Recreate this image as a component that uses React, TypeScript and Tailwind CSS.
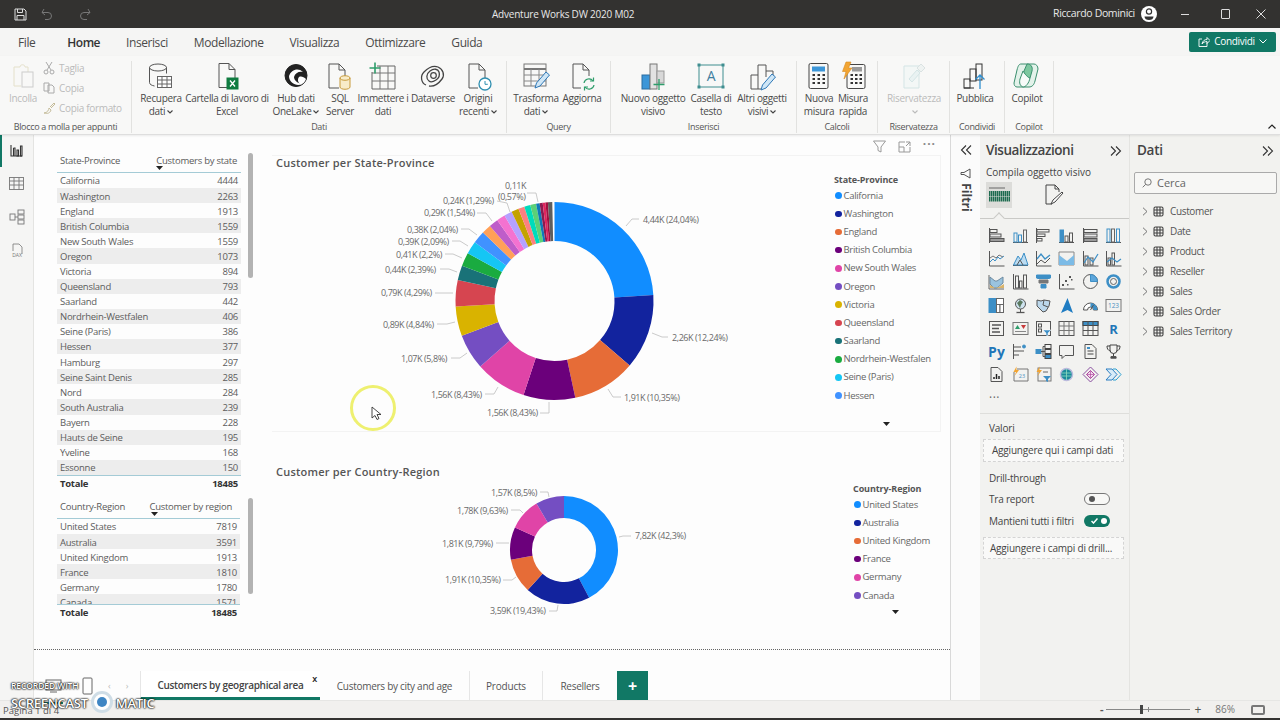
import React from "react";

const FONT = "[font-family:'Open_Sans','Noto_Sans',sans-serif]";
const PALETTE = ["#118dff", "#12239e", "#e66c37", "#6b007b", "#e044a7", "#744ec2", "#d9b300", "#d64550", "#197278", "#1aab40", "#15c6f4", "#4092ff", "#ffa058", "#be5dc9", "#f472d0", "#b5a1ff", "#c4a200", "#fd8080", "#00dbbc", "#5bd078", "#0f7ab8", "#8d1a4f", "#e0245e", "#a01040", "#5e5e5e"];

function arc(cx: number, cy: number, R: number, r: number, a0: number, a1: number) {
  const p = (rad: number, a: number) => {
    const t = ((a / 100) * 360 - 90) * (Math.PI / 180);
    return `${(cx + rad * Math.cos(t)).toFixed(2)} ${(cy + rad * Math.sin(t)).toFixed(2)}`;
  };
  const large = a1 - a0 > 50 ? 1 : 0;
  return `M${p(R, a0)}A${R} ${R} 0 ${large} 1 ${p(R, a1)}L${p(r, a1)}A${r} ${r} 0 ${large} 0 ${p(r, a0)}Z`;
}

function Donut({ cx, cy, R, r, values, labels, lines, viewBox, w, h }: { cx: number; cy: number; R: number; r: number; values: number[]; labels: [string, number, number][]; lines: string[]; viewBox: string; w: number; h: number }) {
  let acc = 0;
  return (
    <svg width={w} height={h} viewBox={viewBox} className="shrink-0">
      {values.map((v, i) => {
        const d = arc(cx, cy, R, r, acc, acc + v);
        acc += v;
        return <path key={i} d={d} fill={PALETTE[i]} />;
      })}
      {lines.map((l, i) => (
        <polyline key={i} points={l} fill="none" stroke="#bdbdbd" strokeWidth="0.8" />
      ))}
      {labels.map(([t, x, y], i) => (
        <text key={i} x={x} y={y + 3} fontSize="9" fill="#6a6a6a" style={{ fontFamily: "'Open Sans'" }} letterSpacing="-0.42">
          {t}
        </text>
      ))}
    </svg>
  );
}

const s1 = ["California:4444", "Washington:2263", "England:1913", "British Columbia:1559", "New South Wales:1559", "Oregon:1073", "Victoria:894", "Queensland:793", "Saarland:442", "Nordrhein-Westfalen:406", "Seine (Paris):386", "Hessen:377", "Hamburg:297", "Seine Saint Denis:285", "Nord:284", "South Australia:239", "Bayern:228", "Hauts de Seine:195", "Yveline:168", "Essonne:150"];
const s2 = ["United States:7819", "Australia:3591", "United Kingdom:1913", "France:1810", "Germany:1780", "Canada:1571"];

function Caret({ className }: { className: string }) {
  return (
    <svg width="7" height="4" viewBox="0 0 7 4" className={className}>
      <path d="M0 0h7L3.500 4z" fill="#222" />
    </svg>
  );
}

function Table({ head, rows, width, bodyH, caretX, total, headPr }: { head: [string, string]; rows: string[]; width: number; bodyH: string; caretX: string; total: string; headPr: string }) {
  return (
    <div style={{ width }} className="shrink-0 text-[9.500px] tracking-[-0.26px] text-[#5c5c5c]">
      <div className={headPr + " relative flex justify-between h-[21px] pl-[3px] pt-[2px] leading-[13px] border-b border-[#a4cbd6] text-[#5a5a5a]"}>
        <span>{head[0]}</span>
        <span>{head[1]}</span>
        <Caret className={caretX} />
      </div>
      <div className={bodyH + " overflow-hidden"}>
        {rows.map((r, i) => {
          const [a, b] = r.split(":");
          return (
            <div key={a} className={i % 2 ? "flex justify-between items-center h-[15.1px] px-[3px] pt-[2px] bg-[#ededed]" : "flex justify-between items-center h-[15.1px] px-[3px] pt-[2px]"}>
              <span>{a}</span>
              <span>{b}</span>
            </div>
          );
        })}
      </div>
      <div className="flex justify-between items-center h-[16px] px-[3px] pt-[1px] font-bold text-[#333] border-t border-[#a4cbd6]">
        <span>Totale</span>
        <span>{total}</span>
      </div>
    </div>
  );
}

function Legend({ title, items, colW, caret }: { title: string; items: string[]; colW: string; caret: string }) {
  return (
    <div className={colW + " shrink-0 relative text-[9.500px] tracking-[-0.3px] text-[#666]"}>
      <div className="h-[10px] leading-[10px] font-bold text-[#555] text-[9px] tracking-[-0.1px] mb-[1.500px]">{title}</div>
      <div className="flex flex-col">
        {items.map((t, i) => (
          <div key={t} className="flex items-center gap-[2px] h-[18.2px] leading-[18px] pl-[1px]">
            <span className="w-[6.500px] h-[6.500px] rounded-full shrink-0" style={{ background: PALETTE[i] }} />
            <span>{t}</span>
          </div>
        ))}
      </div>
      <Caret className={caret} />
    </div>
  );
}

const I = (p: { children: React.ReactNode; w?: number; h?: number; vb?: string; o?: number }) => (
  <svg width={p.w ?? 30} height={p.h ?? 30} viewBox={p.vb ?? "0 0 30 30"} fill="none" stroke="#555" strokeWidth="1" opacity={p.o ?? 1} className="shrink-0">
    {p.children}
  </svg>
);

const RibbonIcons: Record<string, React.ReactNode> = {
  recupera: (
    <I>
      <ellipse cx="12" cy="6.500" rx="8.500" ry="3.500" />
      <path d="M3.500 6.500v15c0 2 2.500 3 5 3.500M20.500 6.500v6" />
      <rect x="11.500" y="15.500" width="14" height="11" fill="#fff" stroke="#666" />
      <path d="M11.500 19h14M11.500 23h14M16 15.500v11M21 15.500v11" stroke="#666" />
    </I>
  ),
  excel: (
    <I>
      <path d="M7 2.500h10l6 6v9M7 2.500v24h8M17 2.500v6h6" />
      <rect x="15" y="17" width="11" height="11" fill="#107c41" stroke="#107c41" />
      <path d="M18 19.500l5 6M23 19.500l-5 6" stroke="#fff" strokeWidth="1.300" />
    </I>
  ),
  onelake: (
    <I>
      <circle cx="15" cy="14.500" r="11" fill="#222" stroke="#222" />
      <path d="M8 15c2-6 9-9 14-4-4-1-8 1-9 5 0 3 3 6 8 7-5 3-13-1-13-8z" fill="#fff" stroke="none" />
      <path d="M18 16c2-1 5 0 7 2-1 3-3 5-5 5.500-3-1-4-5-2-7.500z" fill="#fff" stroke="none" />
    </I>
  ),
  sql: (
    <I>
      <path d="M4 3h10l6 6v9M4 3v24h10M14 3v6h6" />
      <path d="M15 17c0-3 10-3 10 0v9c0 3-10 3-10 0z" fill="#f8ecc9" stroke="#c79a3a" />
      <path d="M15 17c0 3 10 3 10 0" stroke="#c79a3a" />
    </I>
  ),
  immettere: (
    <I>
      <path d="M9 5h18v23H4V11" stroke="#666" />
      <path d="M4 12h23M4 20h23M12 5v23M20 5v23" stroke="#777" />
      <path d="M7 1.500v11M1.500 7h11" stroke="#2e9d6b" strokeWidth="1.600" />
    </I>
  ),
  dataverse: (
    <I>
      <path d="M8 24c-5-2-6-9-2-13s9-7 14-5 7 8 4 12-8 8-13 7" stroke="#444" strokeWidth="1.300" />
      <path d="M11 20c-3-2-3-7 1-10s8-2 9 1 0 6-3 8-5 3-7 1z" stroke="#444" strokeWidth="1.300" />
      <circle cx="15.500" cy="14.500" r="2.800" stroke="#444" strokeWidth="1.200" />
    </I>
  ),
  origini: (
    <I>
      <path d="M6 3h10l6 6v8M6 3v24h9M16 3v6h6" />
      <circle cx="22" cy="23" r="6" fill="#fff" stroke="#2f8fb0" strokeWidth="1.300" />
      <path d="M22 20v3.300h2.800" stroke="#2f8fb0" />
    </I>
  ),
  trasforma: (
    <I>
      <rect x="3" y="3" width="22" height="22" stroke="#777" />
      <path d="M3 8h22" stroke="#777" strokeWidth="2" />
      <path d="M3 14h22M3 20h22M10 8v17M18 8v17" stroke="#888" />
      <path d="M14 27l1.500-5L25 11l3.500 3L19 25z" fill="#cfe6f6" stroke="#2f78b7" />
    </I>
  ),
  aggiorna: (
    <I>
      <path d="M6 3h10l6 6v6M6 3v24h8M16 3v6h6" />
      <path d="M17 22a5 5 0 0 1 9-2M27 24a5 5 0 0 1-9 2" stroke="#2e9d6b" strokeWidth="1.200" />
      <path d="M26.500 16.500V20h-3.500M17.500 29.500V26H21" stroke="#2e9d6b" strokeWidth="1.200" />
    </I>
  ),
  nuovo: (
    <I>
      <rect x="4" y="14" width="8" height="14" fill="#3c96d8" stroke="#2a6ca0" />
      <rect x="12" y="3" width="7" height="25" fill="#e2e2e2" stroke="#777" />
      <rect x="19" y="10" width="7" height="12" fill="#d8d8d8" stroke="#999" />
      <path d="M21 18v11M15.500 23.500h11" stroke="#2e9d6b" strokeWidth="1.300" />
    </I>
  ),
  casella: (
    <I>
      <rect x="3" y="4" width="24" height="22" stroke="#3f8e90" strokeWidth="1" />
      <path d="M1.500 2.500h3v3h-3zM25.500 2.500h3v3h-3zM1.500 24.500h3v3h-3zM25.500 24.500h3v3h-3z" fill="#3f8e90" stroke="none" />
      <text x="15" y="20" fontSize="14" textAnchor="middle" fill="#3f7fa0" stroke="none">A</text>
    </I>
  ),
  altri: (
    <I>
      <path d="M4 28V14h7M11 28V4h8v12M19 10h7v6M4 28h10" />
      <path d="M14 29l1.500-5L25 13l3.500 3L19 27z" fill="#cfe6f6" stroke="#2f78b7" />
    </I>
  ),
  nuovamisura: (
    <I>
      <rect x="5" y="2.500" width="19" height="25" rx="1.500" stroke="#444" />
      <rect x="8" y="5.500" width="13" height="5" fill="#3c96d8" stroke="none" />
      <path d="M8.500 14h2.500M13.500 14h2.500M18.500 14h2.500M8.500 18h2.500M13.500 18h2.500M18.500 18h2.500M8.500 22h2.500M13.500 22h2.500M18.500 22h2.500" stroke="#333" strokeWidth="2" />
    </I>
  ),
  rapida: (
    <I>
      <rect x="9" y="3.500" width="18" height="24" rx="1.500" stroke="#444" />
      <path d="M12.500 14h2.500M17 14h2.500M21.500 14h2.500M12.500 18h2.500M17 18h2.500M21.500 18h2.500M12.500 22h2.500M17 22h2.500M21.500 22h2.500" stroke="#333" strokeWidth="2" />
      <rect x="14" y="6" width="10" height="4.500" fill="#9a9a9a" stroke="none" />
      <path d="M8 1h5l-2.500 6H14L6 18l2-7.500H4.500z" fill="#f2a533" stroke="#d68a1f" strokeWidth="0.600" />
    </I>
  ),
  riserv: (
    <I o={0.45}>
      <path d="M5 5h15v22H5z" stroke="#a9cfd1" fill="#eef6f6" />
      <path d="M10 18l8-9 3 3-8 9z" stroke="#a9cfd1" fill="#d9ecec" />
      <path d="M18 7l4-4 4 4-4 4z" stroke="#b7c9c9" fill="#e5eeee" />
    </I>
  ),
  pubblica: (
    <I>
      <rect x="4" y="18" width="6" height="9" stroke="#333" />
      <rect x="10" y="8" width="6" height="12" stroke="#333" />
      <rect x="16" y="3" width="6" height="16" stroke="#333" />
      <path d="M4 27h10" stroke="#333" />
      <path d="M20 28V14M15.500 18.500L20 14l4.500 4.500" stroke="#2f8fd0" strokeWidth="1.300" />
    </I>
  ),
  copilot: (
    <I>
      <path d="M9 3h13c2 0 4 2 4 5l-3 12c-1 4-3 6-6 6H5c-2 0-3-2-3-4l3-13c1-4 2-6 4-6z" stroke="#3a8f6e" fill="#e3f2ea" />
      <path d="M15 3c4 0 6 3 5 7l-2 7c-4 0-7-3-6-7z" fill="#7cc79f" stroke="#3a8f6e" />
      <path d="M11 10c3 5 6 7 7 7-1 5-4 9-7 9-3-1-4-4-3-8z" fill="#f7fbf9" stroke="#3a8f6e" />
    </I>
  ),
};

function Chev({ c = "#444" }: { c?: string }) {
  return (
    <svg width="6" height="4" viewBox="0 0 6 4" className="inline-block ml-[2px] align-middle">
      <path d="M0.500 0.500L3 3l2.500-2.500" stroke={c} fill="none" strokeWidth="1.100" />
    </svg>
  );
}

function Btn({ w, icon, a, b, caret, off }: { w: string; icon: string; a: string; b?: string; caret?: boolean; off?: boolean }) {
  return (
    <div className={w + " shrink-0 flex flex-col items-center " + (off ? "text-[#bbb]" : "text-[#4a4a4a]")}>
      <div className="h-[31px] flex items-start justify-center">{RibbonIcons[icon]}</div>
      <div className="h-[13px] leading-[13px] whitespace-nowrap">{a}{caret && b === undefined ? <Chev /> : null}</div>
      {b !== undefined && <div className="h-[13px] leading-[13px] whitespace-nowrap">{b}{caret ? <Chev c={off ? "#bbb" : "#444"} /> : null}</div>}
    </div>
  );
}

function Group({ w, label, pl, children }: { w: string; label: string; pl: string; children: React.ReactNode }) {
  return (
    <div className={w + " shrink-0 h-full flex flex-col border-r border-[#e2e2e0]"}>
      <div className={pl + " h-[60px] flex"}>{children}</div>
      <div className="h-[12px] leading-[12px] text-center text-[9px] text-[#555]">{label}</div>
    </div>
  );
}

const V = ({ children }: { children: React.ReactNode }) => (
  <svg width="17" height="17" viewBox="0 0 17 17" fill="none" stroke="#555" strokeWidth="1">
    {children}
  </svg>
);
const B = "#3d8fc6";
const G = "#9a9a9a";
const vizIcons: React.ReactNode[] = [
  <V><path d="M1.500 1v15" /><rect x="2" y="2.500" width="7" height="3" /><rect x="2" y="7" width="11" height="3" fill="#e8e8e8" /><rect x="2" y="11.500" width="14" height="3" fill={G} /></V>,
  <V><path d="M1 15.500h15" /><rect x="2" y="6" width="3" height="9" stroke={B} /><rect x="6.500" y="8" width="3" height="7" stroke={B} /><rect x="11.500" y="3" width="3" height="12" stroke="#666" /></V>,
  <V><path d="M1.500 1v15" /><rect x="2" y="2.500" width="12" height="2.500" /><rect x="2" y="7" width="8" height="2.500" /><rect x="2" y="11.500" width="5" height="2.500" /></V>,
  <V><path d="M1 15.500h15" /><rect x="2" y="3" width="3.500" height="12" fill={B} stroke={B} /><rect x="7" y="9" width="3" height="6" /><rect x="11.500" y="6" width="3" height="9" /></V>,
  <V><path d="M1.500 1v15" /><rect x="2" y="2.500" width="13" height="3" /><rect x="2" y="7" width="13" height="3" fill="#e8e8e8" /><rect x="2" y="11.500" width="13" height="3" fill={G} /></V>,
  <V><path d="M1 15.500h15" /><rect x="2" y="2" width="3" height="13" stroke={B} /><rect x="6.500" y="2" width="3" height="13" stroke="#666" /><rect x="11.500" y="2" width="3" height="13" stroke={B} /></V>,
  <V><path d="M1.500 1v15h15" /><path d="M2 12l3-3 2 2 3-4 2 2 4-3" stroke={B} /><path d="M2 8l3-2 3 2 3-3 4 2" stroke="#777" /></V>,
  <V><path d="M1 15.500h15" /><path d="M1.500 15L6 6l3 4 3-7 4 12z" fill="#bcdcf1" stroke={B} /><path d="M5 15l3-5 3 5" stroke="#555" /></V>,
  <V><path d="M1.500 1v15h15" /><path d="M2 9l4-5 4 5 5-4" stroke={B} strokeWidth="1.300" /><path d="M2 14l4-4 4 3 5-5" stroke="#555" /></V>,
  <V><path d="M1 2h15v13H1z" stroke="#888" /><path d="M1 5l4 3 4 3 7-6v10H1z" fill="#7cbbe6" stroke="none" /></V>,
  <V><path d="M1.500 1v15h15" /><rect x="3" y="6" width="3" height="9" stroke="#555" /><rect x="8" y="8" width="3" height="7" stroke="#555" /><path d="M2 13l4-6 5 5 5-8" stroke={B} strokeWidth="1.200" /></V>,
  <V><path d="M1.500 1v15h15" /><rect x="3" y="8" width="2.500" height="7" stroke="#555" /><rect x="7" y="3" width="2.500" height="12" stroke="#555" /><path d="M2 12l5-4 5 4 4-3" stroke={B} strokeWidth="1.200" /></V>,
  <V><path d="M1 2v14h15" stroke="#666" /><path d="M2 4l5 4 2 0 6-4v6l-6 5-3 0-4-4z" fill="#9ac3de" stroke="#6d8aa0" /><path d="M2 12l5 3 4-1 5-3v4H2z" fill="#d9b36b" stroke="none" /></V>,
  <V><path d="M1.500 1v15h15" /><rect x="3.500" y="3" width="3" height="12" /><rect x="7.500" y="8" width="2.500" height="7" /><rect x="11.500" y="2" width="3" height="13" /></V>,
  <V><path d="M1.500 2h14v3l-1 .5h-12l-1-.5z" fill={B} stroke={B} /><path d="M4 7h9v3H4z" fill="#777" stroke="#777" /><path d="M6 11.500h5V15H6z" fill={B} stroke={B} /></V>,
  <V><path d="M1.500 1v15h15" /><g fill="#555" stroke="none"><rect x="4" y="11" width="2" height="2" /><rect x="7" y="7" width="2" height="2" /><rect x="11" y="3" width="2" height="2" /><rect x="13" y="6" width="1.500" height="1.500" /><rect x="9" y="11" width="1.500" height="1.500" /></g></V>,
  <V><circle cx="8.500" cy="8.500" r="7" stroke="#555" /><path d="M8.500 1.500a7 7 0 0 1 7 7h-7z" fill="#5ca6db" stroke={B} /></V>,
  <V><circle cx="8.500" cy="8.500" r="6" stroke={B} strokeWidth="2.500" /><circle cx="8.500" cy="8.500" r="3" stroke="#666" /></V>,
  <V><rect x="1" y="1.500" width="7.500" height="14" fill={B} stroke={B} /><rect x="8.500" y="1.500" width="7" height="6" fill="#fff" stroke="#666" /><rect x="8.500" y="7.500" width="3.500" height="8" fill="#fff" stroke="#666" /><rect x="12" y="7.500" width="3.500" height="8" fill="#fff" stroke="#666" /></V>,
  <V><circle cx="8.500" cy="7" r="5" fill="#cfe3ef" stroke="#555" /><path d="M5 6l3-3 3 2-2 3-1 3z" fill="#5b7a60" stroke="none" /><path d="M4.500 15.500h8" strokeWidth="1.300" /><path d="M8.500 12v3.500" /></V>,
  <V><path d="M2 3l4 1 3-1 6 1-1 5-3 5-3 1-3-3-3-3z" fill="#bcd8ec" stroke="#555" /><path d="M9 3l-1 5 5 2" stroke="#555" /></V>,
  <V><path d="M9.500 1L15 16l-5.500-3L3 16z" fill="#1f7cc2" stroke="none" /></V>,
  <V><path d="M1.500 13a7 7 0 0 1 14 0h-4a3 3 0 0 0-6 0z" stroke="#555" fill="#fff" /><path d="M8.500 6a7 7 0 0 1 7 7h-4a3 3 0 0 0-3-3z" fill={B} stroke="none" /><path d="M8.500 13l3-5" /></V>,
  <V><rect x="1" y="2.500" width="15" height="12" stroke="#777" /><text x="8.500" y="11" fontSize="6.500" textAnchor="middle" fill="#4a90c0" stroke="none">123</text></V>,
  <V><rect x="1.500" y="1.500" width="14" height="14" /><path d="M4 5h9M4 8.500h7M4 12h8" stroke="#555" strokeWidth="1.300" /></V>,
  <V><rect x="1" y="2.500" width="15" height="12" stroke="#777" /><path d="M3 9l2.500-4L8 9z" fill="#2e9d6b" stroke="none" /><path d="M9 5h5l-2.500 4z" fill="#c83a3a" stroke="none" /><path d="M3 11.500h11" stroke="#888" /></V>,
  <V><rect x="1.500" y="1.500" width="14" height="14" /><rect x="3.500" y="4" width="3" height="3" /><rect x="3.500" y="9" width="3" height="3" /><path d="M8 10h8l-3 3v3l-2-1v-2z" fill="#3d8fc6" stroke="#fff" strokeWidth="0.500" /></V>,
  <V><rect x="1" y="1.500" width="15" height="14" /><path d="M1 6h15M1 10.500h15M6 1.500v14M11 1.500v14" stroke="#777" /></V>,
  <V><rect x="1" y="1.500" width="15" height="14" /><rect x="1" y="1.500" width="15" height="4" fill={B} stroke="#444" /><path d="M1 10.500h15M6 1.500v14M11 1.500v14" /></V>,
  <V><text x="8.500" y="13.500" fontSize="13" fontWeight="700" textAnchor="middle" fill="#1f76b8" stroke="none">R</text></V>,
  <V><text x="8.500" y="14" fontSize="14" fontWeight="700" textAnchor="middle" fill="#1f76b8" stroke="none">Py</text></V>,
  <V><path d="M1.500 1v15" /><path d="M2 4h7M2 8h10M2 12h5" /><circle cx="12" cy="3.500" r="1.500" fill={B} stroke={B} /></V>,
  <V><rect x="1" y="6.500" width="5" height="4" fill={B} stroke={B} /><rect x="10" y="1.500" width="6" height="4" stroke="#444" /><rect x="10" y="6.500" width="6" height="4" stroke="#444" /><rect x="10" y="11.500" width="6" height="4" fill={B} stroke="#444" /><path d="M6 8.500h4M8 3.500v10h2M8 3.500h2" /></V>,
  <V><path d="M1.500 2.500h14v10H7l-3 3v-3H1.500z" /></V>,
  <V><path d="M3 1.500h7l4 4v10H3z" /><path d="M5.500 8h6M5.500 11h6" stroke="#444" /><rect x="5" y="4" width="3" height="2" fill={B} stroke="none" /></V>,
  <V><path d="M5 2h7v5a3.500 3.500 0 0 1-7 0z" stroke="#444" /><path d="M5 3H2c0 3 1 4 3 5M12 3h3c0 3-1 4-3 5M8.500 10.500V13M5.500 15h6" stroke="#444" /><path d="M6 13.500h5v1.500H6z" fill="#444" /></V>,
  <V><path d="M3 1.500h7l4 4v10H3z" /><path d="M6 13v-2M8.500 13V8M11 13v-3" stroke="#222" strokeWidth="1.500" /></V>,
  <V><path d="M5 3h11v12H2V6" stroke="#777" /><text x="10" y="12" fontSize="5.500" textAnchor="middle" fill="#4a90c0" stroke="none">23</text><path d="M4.500 0.500L1.500 6H4L2.500 10 7 4H4.500z" fill="#f2a533" stroke="none" /></V>,
  <V><rect x="3" y="2" width="13" height="13" stroke="#777" /><path d="M4.500 0.500L1.500 6H4L2.500 10 7 4H4.500z" fill="#f2a533" stroke="none" /><path d="M8 10h8l-3 3v3l-2-1v-2z" fill="#3d8fc6" stroke="none" /><path d="M8 6h5" stroke="#666" /></V>,
  <V><circle cx="8.500" cy="8.500" r="6" fill="#1a8a9a" stroke="#bbd" strokeWidth="1.500" /><path d="M4 7h9M4 10h9M8.500 3v11" stroke="#8fdcc0" strokeWidth="0.800" /></V>,
  <V><path d="M8.500 1l7.500 7.500-7.500 7.500L1 8.500z" stroke="#8a4fa0" /><path d="M8.500 4.500l4 4-4 4-4-4z" fill="#f3d9ee" stroke="#b04aa0" /><path d="M4.500 8.500h8M8.500 4.500v8" stroke="#b04aa0" strokeWidth="0.700" /></V>,
  <V><path d="M1 3h6l5 5.500-5 5.500H1l5-5.500z" stroke="#2e7fc2" fill="#d8ecf8" /><path d="M8 3h3l5 5.500-5 5.500H8" stroke="#2ba0d0" /></V>,
];

function ChevRight() {
  return (
    <svg width="6" height="9" viewBox="0 0 6 9" fill="none" stroke="#666" strokeWidth="0.900"><path d="M1 .7l4 3.800-4 3.800" /></svg>
  );
}
function TblIcon() {
  return (
    <svg width="11" height="11" viewBox="0 0 11 11" fill="none" stroke="#444" strokeWidth="1.100"><rect x="1" y="1" width="9" height="9" rx="1.500" /><path d="M1 4h9M1 7h9M4 1v9M7 1v9" /></svg>
  );
}
function Double({ left }: { left?: boolean }) {
  return (
    <svg width="12" height="10" viewBox="0 0 12 10" fill="none" stroke="#333" strokeWidth="1.100">
      {left ? <path d="M6 .5L1.500 5 6 9.500M11 .5L6.500 5 11 9.500" /> : <path d="M1 .5L5.500 5 1 9.500M6 .5L10.500 5 6 9.500" />}
    </svg>
  );
}

export default function App() {
  const tabs = ["File", "Home", "Inserisci", "Modellazione", "Visualizza", "Ottimizzare", "Guida"];
  return (
    <div className={FONT + " relative w-[1280px] h-[720px] overflow-hidden flex flex-col bg-[#f5f5f4] text-[#444]"}>
      {/* Title bar */}
      <div className="h-[28px] shrink-0 bg-[#333230] flex items-center text-[#e8e8e8] text-[10.5px]">
        <div className="w-[492px] shrink-0 flex items-center pl-[14px] gap-[14px]">
          <svg width="13" height="13" viewBox="0 0 13 13" fill="none" stroke="#ddd" strokeWidth="1"><path d="M1 1h9l2 2v9H1z" /><path d="M3.500 1v3.500h5V1M3 12V7.500h7V12" /></svg>
          <svg width="12" height="12" viewBox="0 0 12 12" fill="none" stroke="#777" strokeWidth="1"><path d="M3 1L1 4.500h6a3.500 3.500 0 0 1 0 7H4M1 4.500L4 7" /></svg>
          <svg width="12" height="12" viewBox="0 0 12 12" fill="none" stroke="#777" strokeWidth="1" className="ml-[12px]"><path d="M9 1l2 3.500H5a3.500 3.500 0 0 0 0 7h3M11 4.500L8 7" /></svg>
        </div>
        <div className="w-[561px] shrink-0 text-[10px] tracking-[-0.22px] whitespace-nowrap">Adventure Works DW 2020 M02</div>
        <div className="w-[88px] shrink-0 tracking-[-0.35px] whitespace-nowrap">Riccardo Dominici</div>
        <svg width="16" height="16" viewBox="0 0 16 16" className="shrink-0"><circle cx="8" cy="8" r="8" fill="#fff" /><circle cx="8" cy="5.500" r="2.600" fill="none" stroke="#333" strokeWidth="1.200" /><path d="M3.500 10.500h9c0 2.500-2 3.500-4.500 3.500s-4.500-1-4.500-3.500z" fill="#333" /></svg>
        <div className="ml-[24px] w-[8px] h-[1px] bg-[#ddd]" />
        <div className="ml-[32px] w-[9px] h-[10px] border border-[#ddd] rounded-[1px]" />
        <svg width="10" height="10" viewBox="0 0 10 10" className="ml-[26px]" stroke="#ddd" strokeWidth="1"><path d="M.5.500l9 9M9.500.500l-9 9" /></svg>
      </div>
      {/* Menu tabs */}
      <div className="h-[28px] shrink-0 flex items-center pl-[18px] pr-[4px] text-[12px] text-[#4a4a4a]">
        <div className="flex gap-[26px] tracking-[-0.42px] pt-[2px]">
          {tabs.map((t) => (
            <div key={t} className={t === "File" ? "mr-[6px]" : t === "Home" ? "relative font-semibold text-[#333] tracking-[-0.5px]" : ""}>
              {t}
              {t === "Home" && <div className="absolute left-0 right-0 bottom-[-6px] h-[2px] bg-[#117865]" />}
            </div>
          ))}
        </div>
        <div className="ml-auto mt-[-1px] w-[87px] h-[20px] rounded-[2px] bg-[#117865] text-white text-[10px] flex items-center justify-center gap-[4px]">
          <svg width="12" height="12" viewBox="0 0 12 12" fill="none" stroke="#fff" strokeWidth="0.900"><path d="M9 6.500v4H1V3h3M4 8c.5-3 2.500-4.500 5-4.500V1.500l3 3-3 3V5.500C7 5.500 5 6.500 4 8z" /></svg>
          <span className="tracking-[-0.3px]">Condividi</span>
          <svg width="8" height="5" viewBox="0 0 8 5" fill="none" stroke="#fff"><path d="M.5.500L4 4 7.500.500" /></svg>
        </div>
      </div>
      {/* Ribbon */}
      <div className="relative h-[79px] shrink-0 pt-[5px] pb-[1px] flex text-[10px] tracking-[-0.32px] border-b border-[#dedede] shadow-[0_1px_2px_rgba(0,0,0,0.08)] bg-[#f8f8f7] z-10">
        <div className="w-[132px] shrink-0 h-full flex flex-col border-r border-[#e2e2e0]">
          <div className="h-[60px] flex text-[#bbb]">
            <div className="w-[46px] shrink-0 flex flex-col items-center">
              <div className="h-[31px]">
                <I o={0.55}>
                  <path d="M9 6h3c0-3 5-3 5 0h3v5" stroke="#d6cfa8" />
                  <path d="M9 6H6v19h7" stroke="#d6cfa8" />
                  <rect x="14" y="11" width="11" height="15" stroke="#aaa" />
                </I>
              </div>
              <div className="leading-[13px]">Incolla</div>
            </div>
            <div className="flex flex-col mt-[-1px] gap-[4px] leading-[16px] ml-[-3px]">
              <div className="flex items-center h-[16px] gap-[4px]">
                <svg width="12" height="14" viewBox="0 0 12 14" fill="none" stroke="#aaa"><path d="M3 1l5 8M9 1L4 9" /><circle cx="3" cy="11" r="2" /><circle cx="9" cy="11" r="2" /></svg>
                <span>Taglia</span>
              </div>
              <div className="flex items-center h-[16px] gap-[4px]">
                <svg width="12" height="12" viewBox="0 0 12 12" fill="none" stroke="#aaa"><path d="M1 1h5v8H1zM5 3h4l2 2v6H5z" /></svg>
                <span>Copia</span>
              </div>
              <div className="flex items-center h-[16px] gap-[3px]">
                <svg width="13" height="13" viewBox="0 0 13 13" fill="none" stroke="#c5bc9a"><path d="M1 11c3 0 5-3 5-5l2 2c-1 3-3 4-7 3zM7 5l4-4 1 1-4 4" /></svg>
                <span className="whitespace-nowrap">Copia formato</span>
              </div>
            </div>
          </div>
          <div className="h-[12px] leading-[12px] text-center text-[9px] text-[#555]">Blocco a molla per appunti</div>
        </div>
        <Group w="w-[375px]" label="Dati" pl="pl-[8px]">
          <Btn w="w-[42px]" icon="recupera" a="Recupera" b="dati" caret />
          <Btn w="w-[90px]" icon="excel" a="Cartella di lavoro di" b="Excel" />
          <Btn w="w-[48px]" icon="onelake" a="Hub dati" b="OneLake" caret />
          <Btn w="w-[40px]" icon="sql" a="SQL" b="Server" />
          <Btn w="w-[46px]" icon="immettere" a="Immettere i" b="dati" />
          <Btn w="w-[54px]" icon="dataverse" a="Dataverse" />
          <Btn w="w-[36px]" icon="origini" a="Origini" b="recenti" caret />
        </Group>
        <Group w="w-[104px]" label="Query" pl="pl-[8px]">
          <Btn w="w-[42px]" icon="trasforma" a="Trasforma" b="dati" caret />
          <Btn w="w-[50px]" icon="aggiorna" a="Aggiorna" />
        </Group>
        <Group w="w-[186px]" label="Inserisci" pl="pl-[10px]">
          <Btn w="w-[64px]" icon="nuovo" a="Nuovo oggetto" b="visivo" />
          <Btn w="w-[52px]" icon="casella" a="Casella di" b="testo" />
          <Btn w="w-[50px]" icon="altri" a="Altri oggetti" b="visivi" caret />
        </Group>
        <Group w="w-[81px]" label="Calcoli" pl="pl-[7px]">
          <Btn w="w-[30px]" icon="nuovamisura" a="Nuova" b="misura" />
          <Btn w="w-[38px]" icon="rapida" a="Misura" b="rapida" />
        </Group>
        <Group w="w-[72px]" label="Riservatezza" pl="pl-0">
          <Btn w="w-[72px]" icon="riserv" a="Riservatezza" b="" caret off />
        </Group>
        <Group w="w-[55px]" label="Condividi" pl="pl-0">
          <Btn w="w-[50px]" icon="pubblica" a="Pubblica" />
        </Group>
        <Group w="w-[49px]" label="Copilot" pl="pl-0">
          <Btn w="w-[44px]" icon="copilot" a="Copilot" />
        </Group>
        <svg width="8" height="5" viewBox="0 0 8 5" fill="none" stroke="#222" strokeWidth="1.200" className="absolute right-[4px] bottom-[5px]"><path d="M.5 4.500L4 1l3.500 3.500" /></svg>
      </div>
      {/* Main */}
      <div className="h-[565px] shrink-0 flex">
        {/* Rail */}
        <div className="w-[34px] shrink-0 flex flex-col items-center border-r border-[#e4e4e2] bg-[#f5f5f4] relative">
          <div className="absolute left-0 top-0 w-[2px] h-[32px] bg-[#117865]" />
          <svg width="13" height="13" viewBox="0 0 13 13" fill="none" stroke="#333" strokeWidth="1.100" className="mt-[9px]"><path d="M1 1v11h11" /><path d="M3.500 4v8M3.500 4h1.500v8M7 6v6h1.500V6zM10.500 2v10H12V2z" /></svg>
          <svg width="15" height="13" viewBox="0 0 15 13" fill="none" stroke="#777" strokeWidth="0.900" className="mt-[20px]"><rect x=".5" y=".5" width="14" height="12" /><path d="M.5 4h14M.5 8h14M5 .5v12M10 .5v12" /></svg>
          <svg width="16" height="16" viewBox="0 0 16 16" fill="none" stroke="#777" strokeWidth="0.900" className="mt-[19px]"><rect x="1" y="5" width="5" height="6" /><rect x="9" y="1" width="6" height="4" /><rect x="9" y="6" width="6" height="4" /><rect x="9" y="11" width="6" height="4" /><path d="M6 8h3" /></svg>
          <svg width="16" height="16" viewBox="0 0 16 16" fill="none" stroke="#777" strokeWidth="0.800" className="mt-[18px]"><path d="M4 1h6l3 3v7M4 1v7" /><text x="8" y="14" fontSize="5" textAnchor="middle" fill="#777" stroke="none">DAX</text></svg>
        </div>
        {/* Canvas column */}
        <div className="w-[917px] shrink-0 flex flex-col bg-[#fdfdfd] border-r border-[#d9d9d9]">
          <div className="h-[515px] shrink-0 flex border-b border-dotted border-[#666] pl-[23px]">
            <div className="w-[198px] shrink-0 pt-[17px]">
              <div className="flex gap-[7px] h-[340px]">
                <Table head={["State-Province", "Customers by state"]} rows={s1} width={184} bodyH="h-[302px]" caretX="absolute left-[99px] top-[14px]" total="18485" headPr="pr-[4px]" />
                <div className="w-[5px] h-[125px] mt-[1px] rounded-full bg-[#b3b3b3]" />
              </div>
              <div className="flex gap-[8px] mt-[6px]">
                <Table head={["Country-Region", "Customer by region"]} rows={s2} width={183} bodyH="h-[85px]" caretX="absolute left-[94px] top-[14px]" total="18485" headPr="pr-[8px]" />
                <div className="w-[5px] h-[96px] rounded-full bg-[#b3b3b3]" />
              </div>
            </div>
            <div className="ml-[17px] w-[669px] shrink-0 pt-[3px]">
              <div className="h-[17px] flex items-center justify-end gap-[12px] pr-[5px]">
                <svg width="13" height="13" viewBox="0 0 13 13" fill="none" stroke="#999"><path d="M.5 1h12L8 7v5l-3-1.500V7z" /></svg>
                <svg width="13" height="12" viewBox="0 0 13 12" fill="none" stroke="#999"><path d="M7 1H1v10h11V6M1 6h5v5M8 1h4v4M12 1L8 5" /></svg>
                <div className="text-[#888] text-[12px] leading-[12px] tracking-[1px] font-bold mt-[-5px]">···</div>
              </div>
              <div className="h-[277px] border border-[#f3f3f3] border-l-0">
                <div className="h-[15px] leading-[14px] pl-[4px] text-[11px] font-semibold tracking-[0.22px] text-[#555]">Customer per State-Province</div>
                <div className="flex mt-[4px]">
                  <Donut cx={554.5} cy={301} R={99} r={60} viewBox="272 175 558 257" w={558} h={257}
                    values={[24.04, 12.24, 10.35, 8.43, 8.43, 5.8, 4.84, 4.29, 2.39, 2.2, 2.09, 2.04, 1.54, 1.5, 1.4, 1.29, 1.2, 1.0, 1.0, 0.95, 0.57, 0.5, 0.45, 0.4, 0.7]}
                    labels={[["0,11K", 505, 186], ["(0,57%)", 498, 197], ["0,24K (1,29%)", 443, 201], ["0,29K (1,54%)", 424, 213], ["0,38K (2,04%)", 407, 230], ["0,39K (2,09%)", 398, 242], ["0,41K (2,2%)", 396, 255], ["0,44K (2,39%)", 385, 270], ["0,79K (4,29%)", 381, 293], ["0,89K (4,84%)", 383, 325], ["1,07K (5,8%)", 401, 359], ["1,56K (8,43%)", 431, 395], ["1,56K (8,43%)", 487, 413], ["1,91K (10,35%)", 624, 397.5], ["2,26K (12,24%)", 672, 337.5], ["4,44K (24,04%)", 643, 220]]}
                    lines={["626,226 632,219 639,219", "652,333 662,337 668,337", "608,389 613,397 621,397", "549,402 549,413 540,413", "498,387 494,394 485,394", "467,353 460,358 451,358", "455,322 447,324 437,324", "453,293 435,293", "457,272 449,269 440,269", "462,258 453,254 445,254", "468,246 460,241 452,241", "477,235 469,229 461,229", "492,221 486,213 477,213", "510,212 507,203 497,201", "538,202 536,193 527,193"]}
                  />
                  <Legend title="State-Province" items={["California", "Washington", "England", "British Columbia", "New South Wales", "Oregon", "Victoria", "Queensland", "Saarland", "Nordrhein-Westfalen", "Seine (Paris)", "Hessen"]} colW="ml-[4px] w-[105px]" caret="absolute left-[49px] top-[247px]" />
                </div>
              </div>
              <div className="mt-[32px] h-[16px] leading-[16px] pl-[4px] text-[11px] font-semibold tracking-[0.22px] text-[#555]">Customer per Country-Region</div>
              <div className="flex mt-[4px]">
                <Donut cx={564} cy={550} R={54} r={32} viewBox="272 484 560 140" w={560} h={140}
                  values={[42.3, 19.43, 10.35, 9.79, 9.63, 8.5]}
                  labels={[["1,57K (8,5%)", 491, 492.5], ["1,78K (9,63%)", 457, 510.5], ["1,81K (9,79%)", 442, 544], ["1,91K (10,35%)", 445, 580], ["3,59K (19,43%)", 490, 611], ["7,82K (42,3%)", 635, 536]]}
                  lines={["619,537 623,536 631,536", "558,605 557,611 549,611", "516,577 512,580 503,580", "509,543 496,543", "523,513 520,510 511,510", "549,497 548,492 540,492"]}
                />
                <Legend title="Country-Region" items={["United States", "Australia", "United Kingdom", "France", "Germany", "Canada"]} colW="ml-[21px] w-[85px]" caret="absolute left-[39px] top-[126px]" />
              </div>
            </div>
          </div>
          <div className="h-[21px] shrink-0" />
          {/* Page tabs */}
          <div className="h-[29px] shrink-0 flex text-[10px] text-[#555] items-stretch">
            <div className="w-[106px] shrink-0 flex items-center pl-[11px]">
              <div className="relative flex flex-col items-center">
                <svg width="17" height="14" viewBox="0 0 17 14" fill="none" stroke="#666"><rect x="1" y="1" width="15" height="10" /><path d="M5 13h7" /></svg>
                <div className="absolute top-[23px] left-[-1px] w-[19px] h-[2px] bg-[#117865]" />
              </div>
              <svg width="11" height="18" viewBox="0 0 11 18" fill="none" stroke="#666" className="ml-[20px]"><rect x="1" y="1" width="9" height="16" rx="1" /></svg>
              <span className="ml-[15px] text-[#bbb] text-[9px]">‹</span>
              <span className="ml-[15px] text-[#bbb] text-[9px]">›</span>
            </div>
            <div className="relative w-[180px] shrink-0 bg-white border-l border-[#e6e6e6] border-b-[3px] border-b-[#117865] flex items-center justify-center pt-[2px] font-semibold text-[#444] tracking-[-0.3px]">
              Customers by geographical area
              <span className="absolute right-[3px] top-[1px] text-[9px] font-semibold text-[#222]">x</span>
            </div>
            <div className="w-[150px] shrink-0 border-r border-[#e6e6e6] flex items-center justify-center pt-[1px] tracking-[-0.28px]">Customers by city and age</div>
            <div className="w-[73px] shrink-0 border-r border-[#e6e6e6] flex items-center justify-center pt-[1px] tracking-[-0.2px]">Products</div>
            <div className="w-[74px] shrink-0 flex items-center justify-center pt-[1px] tracking-[-0.3px]">Resellers</div>
            <div className="w-[31px] shrink-0 bg-[#117865] text-white text-[16px] font-bold flex items-center justify-center">+</div>
          </div>
        </div>
        {/* Filter rail */}
        <div className="w-[29px] shrink-0 flex flex-col items-center bg-[#fbfbfb] pt-[10px] text-[#444]">
          <Double left />
          <svg width="11" height="11" viewBox="0 0 11 11" fill="none" stroke="#444" strokeWidth="0.900" className="mt-[13px]"><path d="M10 1v9L4 6.500H1v-2h3z" /></svg>
          <div className="mt-[4px] [writing-mode:vertical-rl] text-[12.500px] font-bold leading-[14px] tracking-[-0.1px]">Filtri</div>
        </div>
        {/* Viz panel */}
        <div className="w-[150px] shrink-0 bg-[#f2f2f0] border-r border-[#e4e4e1] relative">
          <div className="h-[30px] flex items-center justify-between pl-[6px] pr-[7px] pt-[1px]">
            <span className="text-[13.5px] font-semibold tracking-[-0.45px] text-[#444]">Visualizzazioni</span>
            <Double />
          </div>
          <div className="pl-[6px] h-[14px] text-[10px] leading-[14px] tracking-[0px] text-[#444]">Compila oggetto visivo</div>
          <div className="flex items-center pl-[6px] h-[26px] mt-[3px]">
            <div className="w-[26px] h-[26px] bg-[#dcdcd9] flex items-center justify-center">
              <svg width="21" height="16" viewBox="0 0 21 16" fill="none">
                <path d="M0 1h16" stroke="#666" strokeWidth="1" />
                <path d="M0 6.500h21M0 12h21" stroke="#1d6b4f" strokeWidth="5" strokeDasharray="1.500 0.500" />
              </svg>
            </div>
            <svg width="20" height="22" viewBox="0 0 20 22" fill="none" stroke="#444" className="ml-[32px]"><path d="M8 20H2V1h9l4 4v3M11 1v4h4" /><path d="M7 20l2-4L18 8l1 1-8 9z" fill="#fff" /></svg>
          </div>
          <div className="relative mt-[10px] h-[1px] bg-[#c9c9c6]">
            <div className="absolute left-[15px] top-[-4px] w-[8px] h-[8px] rotate-45 bg-[#f2f2f0] border-l border-t border-[#c9c9c6]" />
          </div>
          <div className="pl-[5px] pt-[5px] grid grid-cols-[repeat(6,23.4px)] auto-rows-[23.2px] items-center justify-items-center">
            {vizIcons.map((ic, i) => (
              <div key={i}>{ic}</div>
            ))}
          </div>
          <div className="mt-[8px] pl-[9px] h-[12px] leading-[8px] text-[#666] text-[12px] tracking-[0.5px]">···</div>
          <div className="mt-[7px] h-[1px] bg-[#dededb]" />
          <div className="px-[3px] text-[10px] tracking-[-0.2px]">
            <div className="pl-[6px] h-[14px] leading-[14px] mt-[7px]">Valori</div>
            <div className="mt-[4px] h-[23px] w-[141px] border border-dashed border-[#d4d4d4] bg-[#f9f9f8] flex items-center pl-[8px] whitespace-nowrap">Aggiungere qui i campi dati</div>
            <div className="pl-[6px] h-[14px] leading-[14px] mt-[9px] font-medium">Drill-through</div>
            <div className="pl-[6px] mt-[6px] h-[16px] flex items-center justify-between pr-[16px]">
              <span>Tra report</span>
              <div className="w-[26px] h-[12px] rounded-full border border-[#777] bg-[#f8f8f6] flex items-center pl-[4px]"><div className="w-[6px] h-[6px] rounded-full bg-[#555]" /></div>
            </div>
            <div className="pl-[6px] mt-[6px] h-[16px] flex items-center justify-between pr-[16px] whitespace-nowrap">
              <span>Mantieni tutti i filtri</span>
              <div className="w-[26px] h-[12px] rounded-full bg-[#117865] flex items-center justify-end pr-[3px] gap-[3px]">
                <svg width="7" height="6" viewBox="0 0 7 6" fill="none" stroke="#fff" strokeWidth="1.500"><path d="M.5 3L2.500 5 6.500.5" /></svg>
                <div className="w-[6px] h-[6px] rounded-full bg-white" />
              </div>
            </div>
            <div className="mt-[8px] h-[22px] w-[141px] border border-dashed border-[#d4d4d4] bg-[#f9f9f8] flex items-center pl-[6px] whitespace-nowrap">Aggiungere i campi di drill...</div>
          </div>
        </div>
        {/* Data panel */}
        <div className="w-[150px] shrink-0 bg-[#f2f2ef]">
          <div className="h-[30px] flex items-center justify-between pl-[7px] pr-[6px] pt-[1px]">
            <span className="text-[13.5px] font-semibold text-[#444] tracking-[-0.3px]">Dati</span>
            <Double />
          </div>
          <div className="ml-[4px] mt-[7px] w-[143px] h-[22px] border border-[#aaa] rounded-[2px] bg-[#f7f7f5] flex items-center pl-[7px] gap-[5px] text-[11px] text-[#666]">
            <svg width="10" height="10" viewBox="0 0 10 10" fill="none" stroke="#777"><circle cx="6" cy="4" r="3.200" /><path d="M3.700 6.300L.7 9.300" /></svg>
            <span>Cerca</span>
          </div>
          <div className="mt-[7px] pl-[12px] flex flex-col text-[10px] text-[#555] tracking-[-0.35px]">
            {["Customer", "Date", "Product", "Reseller", "Sales", "Sales Order", "Sales Territory"].map((t) => (
              <div key={t} className="flex items-center h-[20px]">
                <ChevRight />
                <span className="ml-[5px]"><TblIcon /></span>
                <span className="ml-[6px]">{t}</span>
              </div>
            ))}
          </div>
        </div>
      </div>
      {/* Status */}
      <div className="h-[18px] shrink-0 flex items-center bg-[#f1f0ee] text-[9.5px] text-[#555] pl-[3px] border-t border-[#e6e6e4]">
        <span className="pt-[4px]">Pagina 1 di 4</span>
        <div className="ml-auto flex items-center text-[#555]">
          <span className="text-[11px] font-bold mr-[3px]">-</span>
          <div className="relative w-[84px] h-[1px] bg-[#888]">
            <div className="absolute left-[34px] top-[-4px] w-[3px] h-[9px] bg-[#444]" />
            <div className="absolute left-[42px] top-[-2px] w-[1px] h-[5px] bg-[#888]" />
          </div>
          <span className="text-[12px] ml-[4px]">+</span>
          <span className="ml-[14px] text-[10px] text-[#777]">86%</span>
          <div className="ml-[16px] mr-[15px] w-[14px] h-[10px] border-2 border-[#777] rounded-[2px]" />
        </div>
      </div>
      <div className="h-[2px] shrink-0 bg-[#333230]" />
      {/* Cursor highlight */}
      <div className="absolute left-[350px] top-[385px] w-[46px] h-[46px] rounded-full border-[3px] border-[#eef070] pointer-events-none" />
      <svg width="11" height="15" viewBox="0 0 11 15" className="absolute left-[371px] top-[406px]" fill="#fff" stroke="#333" strokeWidth="0.900"><path d="M1 1v11l3-2.500 2 4 2-1-2-4h4z" /></svg>
      {/* Watermark */}
      <div className="absolute left-[11px] top-[681px] pointer-events-none whitespace-nowrap text-white [text-shadow:0_0_2px_#111,0_0_2px_#111,0_0_1px_#111]">
        <div className="text-[8.500px] leading-[10px] tracking-[-0.1px] font-semibold">RECORDED WITH</div>
        <div className="flex items-center mt-[1px] text-[13px] leading-[16px] tracking-[-0.3px] font-semibold">
          <span>SCREENCAST</span>
          <span className="shrink-0 mx-[3px] w-[22px] h-[22px] mt-[-1px] rounded-full border-[3px] border-[#cfdde6] bg-white flex items-center justify-center"><span className="w-[10px] h-[10px] rounded-full bg-[#3f86c4]" /></span>
          <span>MATIC</span>
        </div>
      </div>
    </div>
  );
}
